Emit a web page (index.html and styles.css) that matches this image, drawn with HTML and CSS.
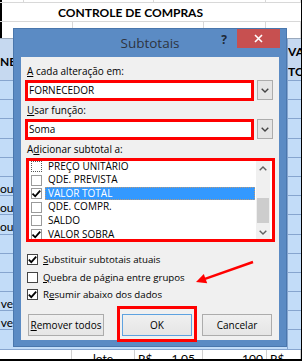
FILE: index.html
```html
<!DOCTYPE html>
<html>
<head>
<meta charset="utf-8">
<link rel="stylesheet" href="styles.css">
</head>
<body>
<div class="sheet">
  <div class="r-top"><span class="c"></span><span class="c"></span><span class="c"></span><span class="c"></span></div>
  <div class="r-title">CONTROLE DE COMPRAS</div>
  <div class="r-blank"><span class="c"></span><span class="c"></span><span class="c"></span><span class="c"></span></div>
  <div class="r-head"><div class="hl">NE</div><div class="hm"></div><div class="hr">VA<br>TO</div></div>
  <div class="data">
    <div class="dr"><div class="dl"></div><div class="dm"></div><div class="dx"></div></div>
    <div class="dr"><div class="dl"></div><div class="dm"></div><div class="dx"></div></div>
    <div class="dr"><div class="dl"></div><div class="dm"></div><div class="dx"></div></div>
    <div class="dr"><div class="dl"></div><div class="dm"></div><div class="dx"></div></div>
    <div class="dr"><div class="dl"></div><div class="dm"></div><div class="dx"></div></div>
    <div class="dr"><div class="dl">ou</div><div class="dm"></div><div class="dx"></div></div>
    <div class="dr"><div class="dl">ou</div><div class="dm"></div><div class="dx"></div></div>
    <div class="dr"><div class="dl">ou</div><div class="dm"></div><div class="dx"></div></div>
    <div class="dr"><div class="dl"></div><div class="dm"></div><div class="dx"></div></div>
    <div class="dr"><div class="dl"></div><div class="dm"></div><div class="dx"></div></div>
    <div class="dr"><div class="dl"></div><div class="dm"></div><div class="dx"></div></div>
    <div class="dr"><div class="dl">ve</div><div class="dm"></div><div class="dx"></div></div>
    <div class="dr"><div class="dl">ve</div><div class="dm"></div><div class="dx"></div></div>
    <div class="dr"><div class="dl"></div><div class="dm"></div><div class="dx"></div></div>
  </div>
  <div class="r-last">
    <div class="lc"></div>
    <div class="lc center">lote</div>
    <div class="lc split"><span>R$</span><span>1,05</span></div>
    <div class="lc right">100</div>
    <div class="lc">R$</div>
  </div>
</div>

<div class="dialog">
  <div class="titlebar">
    <span></span>
    <span class="title">Subtotais</span>
    <div class="tb-right">
      <span class="help">?</span>
      <span class="close"><svg width="9" height="9" viewBox="0 0 9 9"><path d="M1 1 L8 8 M8 1 L1 8" stroke="#fff" stroke-width="1.6" fill="none"/></svg></span>
    </div>
  </div>
  <div class="client">
    <div class="lbl"><u>A</u> cada alteração em:</div>
    <div class="combo">
      <div class="field">FORNECEDOR</div>
      <div class="dd"><svg width="8" height="5" viewBox="0 0 8 5"><polyline points="0.7,0.7 4,4 7.3,0.7" stroke="#444" stroke-width="1.4" fill="none"/></svg></div>
    </div>
    <div class="lbl"><u>U</u>sar função:</div>
    <div class="combo">
      <div class="field">Soma</div>
      <div class="dd"><svg width="8" height="5" viewBox="0 0 8 5"><polyline points="0.7,0.7 4,4 7.3,0.7" stroke="#444" stroke-width="1.4" fill="none"/></svg></div>
    </div>
    <div class="lbl">A<u>d</u>icionar subtotal a:</div>
    <div class="list">
      <div class="items">
        <div class="item first"><span class="cb dotted"></span><span class="txt">PREÇO UNITÁRIO</span></div>
        <div class="item"><span class="cb"></span><span class="txt">QDE. PREVISTA</span></div>
        <div class="item sel"><span class="cb"><svg width="11" height="11" viewBox="0 0 11 11"><path d="M1.5 5.6 L4.2 8.3 L9.2 2.6" stroke="#000" stroke-width="1.8" fill="none"/></svg></span><span class="txt">VALOR TOTAL</span></div>
        <div class="item"><span class="cb"></span><span class="txt">QDE. COMPR.</span></div>
        <div class="item"><span class="cb"></span><span class="txt">SALDO</span></div>
        <div class="item"><span class="cb"><svg width="11" height="11" viewBox="0 0 11 11"><path d="M1.5 5.6 L4.2 8.3 L9.2 2.6" stroke="#000" stroke-width="1.8" fill="none"/></svg></span><span class="txt">VALOR SOBRA</span></div>
      </div>
      <div class="sbar">
        <div class="sb-btn"><svg width="8" height="5" viewBox="0 0 8 5"><polyline points="0.7,4.3 4,1 7.3,4.3" stroke="#606060" stroke-width="1.4" fill="none"/></svg></div>
        <div class="sb-track"><div class="thumb"></div></div>
        <div class="sb-btn"><svg width="8" height="5" viewBox="0 0 8 5"><polyline points="0.7,0.7 4,4 7.3,0.7" stroke="#606060" stroke-width="1.4" fill="none"/></svg></div>
      </div>
    </div>
    <div class="opts">
      <div class="opt"><span class="box"><svg width="11" height="11" viewBox="0 0 11 11"><path d="M1.8 5.6 L4.3 8.1 L9.2 2.7" stroke="#000" stroke-width="1.8" fill="none"/></svg></span><span><u>S</u>ubstituir subtotais atuais</span></div>
      <div class="opt"><span class="box"></span><span><u>Q</u>uebra de página entre grupos</span></div>
      <div class="opt"><span class="box"><svg width="11" height="11" viewBox="0 0 11 11"><path d="M1.8 5.6 L4.3 8.1 L9.2 2.7" stroke="#000" stroke-width="1.8" fill="none"/></svg></span><span>R<u>e</u>sumir abaixo dos dados</span></div>
    </div>
    <div class="btns">
      <div class="btn rem"><u>R</u>emover todos</div>
      <div class="btn ok">OK</div>
      <div class="btn cancel">Cancelar</div>
    </div>
  </div>
</div>

<div class="mark-ok"></div>
<svg class="arrow" width="302" height="361" viewBox="0 0 302 361">
  <line x1="253" y1="262" x2="205" y2="278.8" stroke="#f00" stroke-width="2.4"/>
  <polygon points="196,282 207.2,283.3 203.8,273.9" fill="#f00"/>
</svg>
</body>
</html>
```

FILE: styles.css
```css
html, body {
  margin: 0;
  padding: 0;
}
body {
  width: 302px;
  height: 361px;
  background: #000;
  overflow: hidden;
  position: relative;
  font-family: "Open Sans", "Noto Sans", sans-serif;
}

/* ---------- spreadsheet background ---------- */
.sheet {
  width: 301px;
  height: 359px;
  background: #fff;
  display: flex;
  flex-direction: column;
  overflow: hidden;
  font-family: Lato, "Liberation Sans", sans-serif;
  color: #000;
}
.sheet > * { flex: none; }
.r-top, .r-title, .r-blank {
  box-shadow: inset 2px 0 0 #000;
  box-sizing: border-box;
}
.r-top {
  height: 3px;
  display: grid;
  grid-template-columns: 24px 130px 112px 1fr;
  border-bottom: 1px solid #d8d8d8;
}
.r-top .c, .r-blank .c {
  border-right: 1px solid #d8d8d8;
}
.r-title {
  height: 19px;
  border-bottom: 1px solid #d8d8d8;
  padding-left: 58px;
  font-weight: bold;
  font-size: 12px;
  line-height: 19px;
}
.r-blank {
  height: 17px;
  display: grid;
  grid-template-columns: 73px 131px 62px 1fr;
  border-bottom: 1px solid #9aa9bd;
}
.r-head {
  height: 42px;
  box-sizing: border-box;
  display: grid;
  grid-template-columns: 14px 1fr 14px;
  background: #c6d9f0;
  border-bottom: 1px solid #86a5cf;
  font-weight: bold;
  font-size: 12px;
}
.hl {
  text-align: right;
  overflow: hidden;
  white-space: nowrap;
  padding-top: 16px;
  line-height: 14px;
}
.hr {
  border-left: 1px solid #86a5cf;
  line-height: 20px;
  padding-top: 3px;
  overflow: hidden;
  white-space: nowrap;
}
.data {
  display: flex;
  flex-direction: column;
}
.dr {
  height: 19.2px;
  flex: none;
  box-sizing: border-box;
  display: grid;
  grid-template-columns: 13px 1fr 14px;
  background: #c2dcf8;
  border-bottom: 1px solid #86a5cf;
}
.dl {
  font-size: 12px;
  line-height: 13px;
  padding-top: 5px;
  text-align: right;
  overflow: hidden;
  white-space: nowrap;
}
.dx {
  border-left: 1px solid #86a5cf;
}
.r-last {
  flex: 1 1 0;
  min-height: 0;
  display: grid;
  grid-template-columns: 72px 63px 68px 64px 1fr;
  font-size: 12px;
  line-height: 14px;
  overflow: hidden;
}
.lc {
  border-right: 1px solid #d0d0d0;
  padding: 2px 3px 0;
  white-space: nowrap;
  overflow: hidden;
}
.lc.center { text-align: center; }
.lc.right { text-align: right; }
.lc.split {
  display: flex;
  justify-content: space-between;
  padding-right: 7px;
}

/* ---------- dialog ---------- */
.dialog {
  position: absolute;
  left: 13px;
  top: 28px;
  width: 274px;
  height: 319px;
  box-sizing: border-box;
  background: #5b8bc4;
  border: 1px solid #4a77ad;
  display: flex;
  flex-direction: column;
  font-size: 10px;
  color: #000;
}
.titlebar {
  height: 28px;
  display: grid;
  grid-template-columns: 1fr auto 1fr;
  align-items: start;
}
.title {
  font-size: 13.5px;
  color: #2e3440;
  line-height: 28px;
}
.tb-right {
  justify-self: end;
  display: flex;
  align-items: flex-start;
  padding-right: 6px;
}
.help {
  font-weight: bold;
  font-size: 12px;
  color: #1e2836;
  line-height: 16px;
  margin-top: 3px;
  margin-right: 10px;
}
.close {
  width: 43px;
  height: 19px;
  background: #c75050;
  display: flex;
  align-items: center;
  justify-content: center;
}
.close svg { display: block; }

.client {
  margin: 0 7px 6px 7px;
  height: 283px;
  box-sizing: border-box;
  background: #f0f0f0;
  padding: 7px 0 0 6px;
  display: flex;
  flex-direction: column;
}
.client > * { flex: none; }
.lbl {
  height: 15px;
  line-height: 15px;
  margin-top: 2px;
  white-space: nowrap;
}
.lbl:first-child { margin-top: 0; }

.combo {
  display: flex;
  margin-top: 1px;
  margin-left: -2px;
  height: 21px;
  align-items: flex-start;
}
.field {
  width: 229px;
  height: 21px;
  box-sizing: border-box;
  border: 3px solid #f00;
  background: #fff;
  padding-left: 1px;
  line-height: 15px;
}
.dd {
  width: 16px;
  height: 20px;
  box-sizing: border-box;
  margin-left: 3px;
  border: 1px solid #acacac;
  background: #e5e5e5;
  display: flex;
  align-items: center;
  justify-content: center;
}
.dd svg { display: block; }

.list {
  margin-top: 1px;
  margin-left: -1px;
  width: 249px;
  height: 84px;
  box-sizing: border-box;
  border: 3px solid #f00;
  background: #fff;
  display: flex;
}
.items {
  flex: 1;
  overflow: hidden;
}
.item {
  height: 13.6px;
  display: flex;
  align-items: center;
  padding-left: 2px;
}
.item.first { margin-top: -1.4px; }
.cb {
  width: 11px;
  height: 11px;
  box-sizing: border-box;
  border: 1px solid #9a9a9a;
  background: #fff;
  flex: none;
  position: relative;
}
.cb svg, .box svg {
  position: absolute;
  left: -1px;
  top: -1px;
}
.cb.dotted { border: 1px dotted #555; }
.txt {
  flex: 1;
  margin-left: 3px;
  margin-right: 1px;
  padding-left: 3px;
  height: 13.6px;
  line-height: 13.6px;
  white-space: nowrap;
  box-sizing: border-box;
}
.item.sel .txt {
  background: #3399ff;
  color: #fff;
  outline: 1px dotted #b89a7c;
  outline-offset: -1px;
}
.sbar {
  width: 14px;
  margin-right: 2px;
  background: #f0f0f0;
  display: flex;
  flex-direction: column;
}
.sb-btn {
  height: 14px;
  display: flex;
  align-items: center;
  justify-content: center;
}
.sb-btn svg { display: block; }
.sb-track {
  flex: 1;
  padding-top: 23px;
}
.thumb {
  height: 25px;
  margin: 0 1px;
  background: #cdcdcd;
}

.opts {
  margin-top: 9px;
  display: flex;
  flex-direction: column;
  font-size: 9.7px;
}
.opt {
  height: 17.5px;
  display: flex;
  align-items: center;
  gap: 5px;
  white-space: nowrap;
}
.box {
  width: 11px;
  height: 11px;
  box-sizing: border-box;
  border: 1px solid #444;
  background: #fff;
  position: relative;
  flex: none;
}

.btns {
  margin-top: 10.5px;
  padding-left: 1px;
  display: flex;
}
.btn {
  height: 22px;
  box-sizing: border-box;
  border: 1px solid #acacac;
  background: linear-gradient(#f0f0f0, #e5e5e5);
  text-align: center;
  line-height: 20px;
  white-space: nowrap;
}
.btn.rem { width: 76px; }
.btn.ok { width: 70px; margin-left: 18px; border-color: #5ea2e0; }
.btn.cancel { width: 70px; margin-left: 10px; }

/* ---------- annotations ---------- */
.mark-ok {
  position: absolute;
  left: 117px;
  top: 306px;
  width: 80px;
  height: 36px;
  box-sizing: border-box;
  border: 3px solid #f00;
}
.arrow {
  position: absolute;
  left: 0;
  top: 0;
  pointer-events: none;
}
```
